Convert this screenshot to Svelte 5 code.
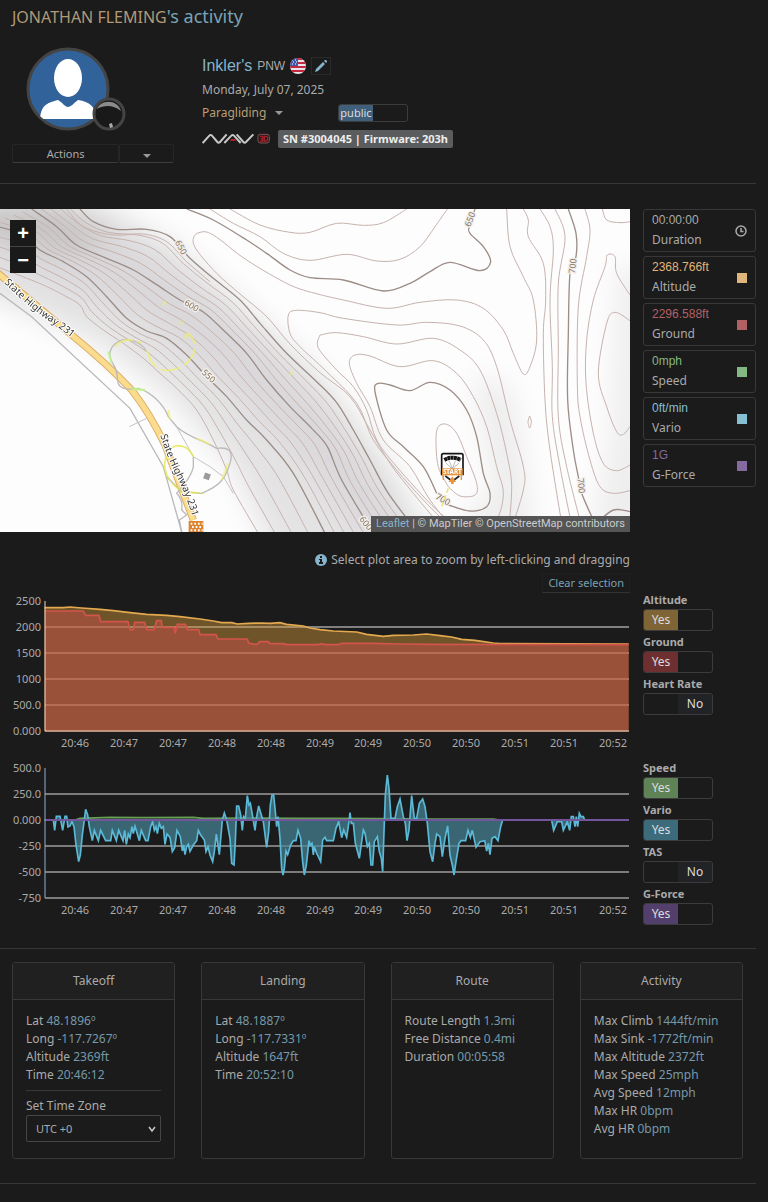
<script lang="ts">
	type Point = [number, number];

	const readouts = [
		{ value: '00:00:00', label: 'Duration', tone: 'plain' },
		{ value: '2368.766ft', label: 'Altitude', tone: 'altitude' },
		{ value: '2296.588ft', label: 'Ground', tone: 'ground' },
		{ value: '0mph', label: 'Speed', tone: 'speed' },
		{ value: '0ft/min', label: 'Vario', tone: 'vario' },
		{ value: '1G', label: 'G-Force', tone: 'gforce' }
	];

	let heightSeries = $state([
		{ id: 'altitude', label: 'Altitude', on: true },
		{ id: 'ground', label: 'Ground', on: true },
		{ id: 'heart', label: 'Heart Rate', on: false }
	]);

	let rateSeries = $state([
		{ id: 'speed', label: 'Speed', on: true },
		{ id: 'vario', label: 'Vario', on: true },
		{ id: 'tas', label: 'TAS', on: false },
		{ id: 'gforce', label: 'G-Force', on: true }
	]);

	let isPublic = $state(true);

	const panels = [
		{
			title: 'Takeoff',
			rows: [['Lat', '48.1896º'], ['Long', '-117.7267º'], ['Altitude', '2369ft'], ['Time', '20:46:12']],
			zone: true
		},
		{
			title: 'Landing',
			rows: [['Lat', '48.1887º'], ['Long', '-117.7331º'], ['Altitude', '1647ft'], ['Time', '20:52:10']]
		},
		{
			title: 'Route',
			rows: [['Route Length', '1.3mi'], ['Free Distance', '0.4mi'], ['Duration', '00:05:58']]
		},
		{
			title: 'Activity',
			rows: [
				['Max Climb', '1444ft/min'],
				['Max Sink', '-1772ft/min'],
				['Max Altitude', '2372ft'],
				['Max Speed', '25mph'],
				['Avg Speed', '12mph'],
				['Max HR', '0bpm'],
				['Avg HR', '0bpm']
			]
		}
	];

	const times = ['20:46', '20:47', '20:47', '20:48', '20:48', '20:49', '20:49', '20:50', '20:50', '20:51', '20:51', '20:52'];
	const timeX = (i: number) => 75 + i * 49 - Math.floor(i / 6);

	const heightTicks = ['2500', '2000', '1500', '1000', '500.0', '0.000'];
	const rateTicks = ['500.0', '250.0', '0.000', '-250', '-500', '-750'];
	const tickY = (i: number) => 7 + i * 26;

	// Plot traces, three units to the pixel
	const altitude =
		'134,203 190,203 210,201 245,204 300,208 340,212 390,218 440,223 500,226 540,230 600,237 640,243 665,248 695,248 712,252 745,250 785,249 810,250 840,248 860,253 910,258 930,264 960,269 1000,273 1070,276 1100,283 1150,289 1180,286 1240,285 1280,282 1320,287 1355,291 1385,298 1425,301 1480,309 1500,311 1886,312';
	const ground =
		'134,213 250,213 257,226 297,226 302,245 384,245 390,269 400,269 404,247 434,247 440,269 462,269 470,242 484,242 486,262 522,262 526,280 532,253 556,253 562,269 596,269 600,284 648,284 654,297 742,297 746,309 770,314 780,305 805,305 810,311 850,311 860,314 955,314 962,311 975,314 1015,314 1025,310 1120,310 1200,312 1300,313 1886,314';
	const vario =
		'134,195 160,195 164,226 169,184 180,184 188,226 195,184 200,184 204,216 210,213 216,200 222,215 228,270 236,320 241,300 247,240 257,163 263,180 268,215 277,257 283,226 295,257 302,226 317,257 332,257 337,226 349,257 356,226 369,257 374,226 379,268 385,237 390,248 396,215 400,236 405,214 418,257 424,226 437,257 444,257 452,215 458,200 463,226 468,215 472,236 478,205 484,220 490,215 495,268 501,237 510,247 517,290 524,278 531,226 541,245 547,288 551,270 555,299 560,275 565,268 570,289 580,270 590,257 595,226 602,240 613,255 618,290 624,275 630,300 638,320 643,290 649,237 658,299 667,195 673,174 680,195 690,250 695,325 702,330 706,260 710,153 716,153 722,180 727,226 731,185 736,190 742,122 747,150 751,145 758,185 765,226 770,185 776,153 784,180 790,200 800,277 806,230 811,150 816,120 821,120 826,170 830,215 834,185 840,250 845,340 849,360 853,340 858,288 863,299 872,270 880,257 888,257 894,226 902,250 908,320 913,360 919,330 927,257 931,270 936,265 940,300 943,275 950,295 955,305 962,320 968,255 975,247 980,257 1000,257 1008,220 1016,200 1025,248 1031,225 1040,247 1047,200 1050,173 1054,205 1060,205 1066,265 1078,310 1090,225 1095,235 1102,275 1108,265 1113,330 1118,330 1123,260 1132,245 1138,290 1144,310 1148,350 1152,230 1156,120 1162,60 1167,100 1173,190 1185,190 1192,155 1200,132 1210,185 1216,205 1221,257 1227,225 1235,122 1243,190 1250,190 1258,145 1268,132 1275,155 1282,205 1290,290 1298,320 1305,265 1310,237 1320,245 1327,305 1335,250 1343,213 1350,300 1357,330 1362,360 1368,320 1377,265 1383,257 1397,257 1404,226 1411,247 1417,226 1428,277 1440,260 1454,257 1460,288 1465,265 1470,299 1476,250 1485,245 1494,257 1502,215 1508,195 1655,195 1661,226 1672,200 1685,200 1690,226 1702,200 1709,226 1714,185 1720,185 1725,215 1729,185 1733,215 1738,175 1743,185 1750,185 1754,195 1886,195';
	const speed =
		'134,195 225,195 240,190 330,187 430,188 580,187 610,190 740,189 900,190 1000,190 1130,191 1300,192 1480,192 1500,195 1886,195';

	function parse(s: string): Point[] {
		return s.split(' ').map((p) => p.split(',').map(Number) as Point);
	}

	// Catmull-Rom through every point
	function curve(s: string): string {
		const p = parse(s);
		let d = `M${p[0]}`;
		for (let i = 0; i < p.length - 1; i++) {
			const a = p[Math.max(i - 1, 0)];
			const b = p[i];
			const c = p[i + 1];
			const e = p[Math.min(i + 2, p.length - 1)];
			d += `C${b[0] + (c[0] - a[0]) / 6},${b[1] + (c[1] - a[1]) / 6} ${c[0] - (e[0] - b[0]) / 6},${c[1] - (e[1] - b[1]) / 6} ${c}`;
		}
		return d;
	}

	function between(from: string, to: string, t: number): string {
		const a = parse(from);
		const b = parse(to);
		return a.map(([x, y], i) => `${x + (b[i][0] - x) * t},${y + (b[i][1] - y) * t}`).join(' ');
	}

	// Index contours of the west slope, same number of points in each
	const slope = [
		'240,27 280,65 350,88 440,88 510,110 570,175 640,235 720,300 780,370 860,460 950,545 1010,608 1060,690 1110,780 1165,880 1255,1000',
		'95,27 170,80 230,135 320,175 400,210 470,254 540,300 610,336 680,400 740,460 800,540 870,620 935,685 982,740 1025,840 1120,1000',
		'-40,72 60,100 120,150 190,185 260,230 320,290 380,355 440,393 500,415 560,465 620,530 680,590 740,660 800,720 880,820 975,1000',
		'-60,180 30,215 130,255 190,285 240,315 260,350 310,390 370,430 430,475 480,520 530,565 590,630 640,720 680,810 700,870 775,1000'
	];

	const indexLines = [
		...slope.slice(0, 3),
		'560,27 640,60 740,120 800,160 870,210 930,233 1030,240 1150,273 1230,250 1290,215 1350,187 1440,212 1472,185 1450,140 1410,100 1408,80 1425,27',
		'1310,880 1270,800 1210,740 1160,690 1125,575 1135,550 1170,555 1230,572 1290,547 1350,570 1400,630 1430,710 1450,820 1470,880 1460,920 1410,933 1345,915',
		'1705,27 1728,100 1728,170 1710,220 1705,400 1703,600 1720,750 1735,830 1745,880 1780,960 1800,1000',
		'1790,970 1840,930 1890,935'
	];

	const contours = [
		...[0.2, 0.4, 0.6, 0.8].flatMap((t) => [between(slope[0], slope[1], t), between(slope[1], slope[2], t)]),
		...[0.25, 0.5, 0.75, 1].map((t) => between(slope[2], slope[3], t)),
		'200,27 250,80 340,105 430,102 500,125 560,185 630,245',
		'960,284 870,255 740,180 640,105 600,97 580,115 590,150 650,220 720,282 800,350 870,432 960,518 1050,590 1110,690 1170,790 1240,880 1340,1000',
		'690,27 780,75 870,97 930,97 1010,70 1090,76 1150,68 1220,27',
		'630,27 700,70 780,110 850,160 930,181 1040,163 1130,183 1200,178 1260,140 1305,80 1342,27',
		'960,284 1030,300 1160,325 1260,307 1370,300 1450,325 1510,390 1540,460 1570,522 1590,500 1610,420 1600,300 1570,230 1530,140 1520,27',
		'1530,1000 1570,870 1570,800 1530,660 1490,500 1450,420 1380,378 1280,367 1190,375 1030,355 960,338 890,331 865,345 870,400 900,440 980,515 1070,610 1120,720 1190,810 1270,900 1370,1000',
		'960,405 952,430 962,455 1010,510 1060,560 1100,630 1130,720 1190,800 1310,930 1400,1000',
		'960,405 1010,398 1090,410 1190,432 1300,415 1380,450 1440,510 1490,640 1520,760 1535,860 1525,1000',
		'1370,1000 1290,900 1230,800 1150,720 1110,620 1070,550 1048,490 1065,465 1110,468 1200,500 1300,482 1370,520 1420,590 1460,680 1490,800 1510,880 1490,960 1440,1000',
		'1345,860 1315,800 1308,720 1315,680 1340,673 1370,700 1400,770 1430,850 1425,885 1380,888 1345,860',
		'1570,27 1585,60 1585,110 1630,190 1637,300 1630,400 1635,600 1650,750 1690,1000',
		'1620,27 1650,80 1660,150 1650,300 1657,500 1657,650 1680,800 1720,1000',
		'1665,27 1695,110 1675,250 1675,450 1675,650 1700,800 1750,1000',
		'1755,27 1770,90 1760,170 1735,320 1732,550 1740,650 1770,780 1800,860 1840,880 1890,872',
		'1890,285 1850,220 1845,170 1822,165 1815,200 1780,300 1760,420 1758,550 1780,700 1810,790 1850,812 1890,795',
		'1890,362 1845,337 1820,370 1795,520 1820,620 1850,695 1870,703 1890,680',
		'1807,27 1820,60 1860,68 1890,65',
		'1589,648 1584,665 1589,684 1594,665 1589,648'
	];

	const elevations = [
		{ text: '650', x: 543, y: 142, turn: 62 },
		{ text: '600', x: 575, y: 317, turn: 30 },
		{ text: '550', x: 626, y: 528, turn: 42 },
		{ text: '650', x: 1410, y: 58, turn: -70 },
		{ text: '700', x: 1718, y: 198, turn: -84 },
		{ text: '700', x: 1744, y: 857, turn: 84 },
		{ text: '700', x: 1329, y: 898, turn: 30 },
		{ text: '600', x: 1098, y: 970, turn: 52 }
	];
</script>

{#snippet toggles(series: { id: string; label: string; on: boolean }[])}
	<div class="toggles">
		{#each series as s (s.id)}
			<div class="toggle">
				<label class="toggle-label" for="show-{s.id}">{s.label}</label>
				<span class="switch {s.id}">
					<input type="checkbox" id="show-{s.id}" bind:checked={s.on} />
					<span class="half yes">{s.on ? 'Yes' : ''}</span>
					<span class="half no">{s.on ? '' : 'No'}</span>
				</span>
			</div>
		{/each}
	</div>
{/snippet}

{#snippet axisLabels(ticks: string[])}
	{#each ticks as tick, i}
		<text x="41" y={tickY(i) + 4} text-anchor="end">{tick}</text>
	{/each}
	{#each times as time, i}
		<text x={timeX(i)} y="153" text-anchor="middle">{time}</text>
	{/each}
{/snippet}

<main>
	<h1><a href="#pilot">JONATHAN FLEMING</a>'s activity</h1>

	<header class="summary">
		<div class="pilot">
			<div class="avatar">
				<svg viewBox="0 0 84 84" aria-label="Pilot" role="img">
					<defs>
						<clipPath id="face"><circle cx="42" cy="42" r="39" /></clipPath>
					</defs>
					<circle cx="42" cy="42" r="40" fill="#31639a" stroke="#444" stroke-width="3" />
					<g fill="#fff" clip-path="url(#face)">
						<ellipse cx="42" cy="31" rx="14" ry="19" />
						<path d="M14 72C15 59 20 56 32 53C37 56 39 60 42 60S48 56 52 53C64 55 69 59 71 72Z" />
					</g>
				</svg>
				<svg class="badge" viewBox="0 0 34 34" aria-hidden="true">
					<circle cx="17" cy="17" r="15" fill="#191919" stroke="#444" stroke-width="3" />
					<path d="M5 12C8 3 25 1 29 14C22 9 14 7 5 12Z" fill="#8b8b8b" />
					<path d="M17 27L20 26L21 30L18 31Z" fill="#aaa" />
				</svg>
			</div>
			<div class="actions">
				<button type="button">Actions</button>
				<button type="button" class="more" aria-label="More actions"><span class="caret"></span></button>
			</div>
		</div>

		<div class="flight">
			<div class="site">
				<a href="#site">Inkler's</a>
				<span class="region">PNW</span>
				<svg class="flag" viewBox="0 0 16 16" role="img" aria-label="United States">
					<defs>
						<clipPath id="round"><circle cx="8" cy="8" r="8" /></clipPath>
					</defs>
					<g clip-path="url(#round)">
						<rect width="16" height="16" fill="#e8e4ea" />
						<path d="M0 1H16M0 5H16M0 9H16M0 13H16" stroke="#c3283f" stroke-width="2" />
						<rect width="8" height="8" fill="#3d58a8" />
						<path d="M2 2h1M5 2h1M3 4h1M6 4h1M2 6h1M5 6h1" stroke="#fff" />
					</g>
				</svg>
				<button type="button" class="edit" aria-label="Edit site">
					<svg viewBox="0 0 12 12" fill="#85b4cc">
						<path d="M0 12L1 9L8 2L10 4L3 11Z" />
						<path d="M9 1L10 0H11L12 1V2L11 3Z" />
					</svg>
				</button>
			</div>
			<div class="date">Monday, July 07, 2025</div>
			<div class="kind">
				<span class="sport">
					<select aria-label="Activity type">
						<option>Paragliding</option>
					</select>
					<span class="caret"></span>
				</span>
				<label class="switch public">
					<input type="checkbox" bind:checked={isPublic} aria-label="public" />
					<span class="half yes">{isPublic ? 'public' : ''}</span>
					<span class="half no">{isPublic ? '' : 'private'}</span>
				</label>
			</div>
			<div class="device">
				<svg class="brand" viewBox="0 0 210 36" role="img" aria-label="Instrument maker">
					<g fill="none" stroke="#c8c8c8" stroke-width="6">
						<path d="M2 30L22 8Q26 4 30 8L46 27Q50 31 54 27L74 4" />
						<path d="M67 30L88 8Q92 4 96 8L116 30" />
						<path d="M104 4L124 27Q128 31 132 27L154 4" />
					</g>
					<path d="M84 23L88 18H98L102 23Z" fill="#c9202f" />
					<rect x="168" y="4" width="34" height="26" rx="7" fill="none" stroke="#8b5055" stroke-width="3" />
					<path d="M174 10H182V24H174M176 17H182M187 10V24H192Q197 24 197 17T192 10Z" fill="none" stroke="#a4202c" stroke-width="4" />
				</svg>
				<span class="serial">SN #3004045 | Firmware: 203h</span>
			</div>
		</div>
	</header>

	<hr />

	<section class="row">
		<div class="map">
			<svg viewBox="0 27 1890 969" preserveAspectRatio="xMinYMin slice" role="img" aria-label="Flight track">
				<defs>
					<filter id="soft" x="-20%" y="-20%" width="140%" height="140%">
						<feGaussianBlur stdDeviation="40" />
					</filter>
					<path id="road-north" d="M12 248Q90 325 140 358T260 450" />
					<path id="road-south" d="M481 706Q500 770 535 840T590 1000" />
				</defs>
				<rect y="27" width="1890" height="969" fill="#fdfdfd" />
				<g filter="url(#soft)">
					<path d="M-80 0H290L520 130L760 340L960 520L1130 730L1330 1060H820L700 800L500 580L280 420L-80 270Z" fill="#e4e3e4" />
					<path d="M-80 0H200L400 120L600 260L800 440L1000 640L1180 900L1200 1060H1120L930 800L700 560L460 370L-80 140Z" fill="#dad8da" />
					<path d="M-80 0H160L340 130L200 160L-80 100Z" fill="#c6c4c5" />
					<path d="M1420 520L1530 560L1570 760L1600 1000H1330L1480 880Z" fill="#ececec" />
					<path d="M1850 200H1960V1060H1760L1830 700Z" fill="#eeeeef" />
				</g>
				<g fill="none" stroke="#c6b3ae" stroke-width="3">
					{#each contours as line}
						<path d={curve(line)} />
					{/each}
				</g>
				<g fill="none" stroke="#9c8d87" stroke-width="4">
					{#each indexLines as line}
						<path d={curve(line)} />
					{/each}
				</g>

				<!-- Roads -->
				<g fill="none">
					<path d="M0 280L95 350L390 625L490 800L545 996" stroke="#b9b9bd" stroke-width="4" />
					<path d="M388 680L440 655M530 680L580 770L630 800L670 830L700 880" stroke="#c4c4c4" stroke-width="3" />
					<path d="M-8 218L215 405Q320 490 395 570Q450 640 495 735L580 960" stroke="#dcae6c" stroke-width="22" />
					<path d="M-8 218L215 405Q320 490 395 570Q450 640 495 735L580 960" stroke="#fbdc8d" stroke-width="16" />
				</g>

				<!-- Track -->
				<g fill="none" stroke-width="4" stroke="#bcbabc">
					<path d="M440 455C420 415 350 400 330 455C325 490 350 490 352 530C350 570 380 570 415 565C450 575 490 610 505 650L530 680C570 715 600 715 650 745C690 740 700 755 690 790C675 840 655 860 605 880L545 875L500 830" />
					<path d="M580 770V800Q575 830 530 880Q550 900 545 930L560 945L538 960L545 996" />
				</g>
				<g fill="none" stroke="#eef06b" stroke-width="5" opacity="0.8">
					<path d="M345 440C365 415 400 415 425 430M440 450C460 520 500 520 545 500C600 465 590 415 560 400" stroke-dasharray="60 14" />
					<path d="M400 567L435 570M505 630L510 660M590 715L630 733M685 790L665 840" />
					<path d="M580 770C565 735 525 725 505 755C480 800 500 850 550 875L610 880" stroke="#e4e63e" stroke-dasharray="90 8" />
					<path d="M490 307l6 4M542 366l4 4M555 405l8 6M872 518l4 4" stroke-width="16" opacity="0.7" />
				</g>
				<path d="M325 455L335 490M395 567L435 570" fill="none" stroke="#bdf38f" stroke-width="6" />
				<rect x="612" y="820" width="18" height="18" fill="#9b9b9b" transform="rotate(20 621 829)" />

				<g class="elevation">
					{#each elevations as e}
						<text x={e.x} y={e.y + 9} transform="rotate({e.turn} {e.x} {e.y})">{e.text}</text>
					{/each}
				</g>
				<g class="road-name">
					<text><textPath href="#road-north">State Highway 231</textPath></text>
					<text><textPath href="#road-south">State Highway 231</textPath></text>
				</g>

				<!-- Landing flag -->
				<rect x="566" y="963" width="44" height="36" fill="#dd8431" />
				<path d="M572 971H608M576 981H608M572 991H608" stroke="#fff" stroke-width="6" stroke-dasharray="5 6" />

				<!-- Takeoff marker -->
				<g>
					<path d="M1345 865L1325 920" stroke="#efe37d" stroke-width="5" stroke-dasharray="14 8" />
					<path d="M1325 826V766Q1325 761 1330 761H1384Q1389 761 1389 766V826" fill="#fff" stroke="#161616" stroke-width="5" />
					<path d="M1333 780Q1357 766 1382 780" fill="none" stroke="#161616" stroke-width="12" stroke-dasharray="9 1" />
					<path d="M1337 788L1356 806M1348 783L1357 806M1366 783L1357 806M1378 788L1358 806" stroke="#999" stroke-width="2" />
					<rect x="1326" y="805" width="62" height="21" fill="#e8943f" />
					<text class="start" x="1357" y="823" text-anchor="middle">START</text>
					<path d="M1330 826V840M1384 826V840" stroke="#e8943f" stroke-width="4" />
					<path d="M1336 828L1352 840M1378 828L1362 840" stroke="#222" stroke-width="5" />
					<path d="M1357 829L1368 846H1361V852H1353V846H1346Z" fill="#e8943f" />
				</g>
			</svg>
			<div class="zoom">
				<button type="button" aria-label="Zoom in">+</button>
				<button type="button" aria-label="Zoom out">−</button>
			</div>
			<div class="credit"><a href="#leaflet">Leaflet</a> | © MapTiler © OpenStreetMap contributors</div>
		</div>

		<div class="readouts">
			{#each readouts as r}
				<div class="readout {r.tone}">
					<div>
						<div class="value">{r.value}</div>
						<div>{r.label}</div>
					</div>
					{#if r.tone === 'plain'}
						<svg class="clock" viewBox="0 0 12 12" fill="none" stroke="#aaa" stroke-width="1.5" aria-hidden="true">
							<circle cx="6" cy="6" r="5" />
							<path d="M6 3V6.5H8.500" />
						</svg>
					{:else}
						<span class="swatch"></span>
					{/if}
				</div>
			{/each}
		</div>
	</section>

	<section class="row plots">
		<div class="charts">
			<div class="hint">
				<svg viewBox="0 0 12 12" aria-hidden="true">
					<circle cx="6" cy="6" r="6" fill="#85b4cc" />
					<path d="M5 2H7V4H5ZM4 5H7V8H8V10H4V8H5V6H4Z" fill="#1b1b1b" />
				</svg>
				Select plot area to zoom by left-clicking and dragging
			</div>
			<button type="button" class="clear">Clear selection</button>

			<svg class="chart" viewBox="0 0 630 167" role="img" aria-label="Altitude and ground">
				{#each heightTicks.slice(1, 5) as _, i}
					<path d="M45 {tickY(i + 1)}H629" stroke="#e6e6e6" />
				{/each}
				<g transform="translate(0 -54) scale(0.33333)">
					{#if heightSeries[0].on}
						<polygon points="134,575 {altitude} 1886,575" fill="#d79a3c" fill-opacity="0.45" />
						<polyline points={altitude} fill="none" stroke="#e3a94f" stroke-width="5" />
					{/if}
					{#if heightSeries[1].on}
						<polygon points="134,575 {ground} 1886,575" fill="#c6504a" fill-opacity="0.5" />
						<polyline points={ground} fill="none" stroke="#d2544b" stroke-width="5" />
					{/if}
				</g>
				<path d="M45 7V137H629" fill="none" stroke="#f0d9c4" />
				{@render axisLabels(heightTicks)}
			</svg>

			<svg class="chart" viewBox="0 0 630 167" role="img" aria-label="Speed, vario and g-force">
				{#each rateTicks.slice(1) as _, i}
					<path d="M45 {tickY(i + 1)}H629" stroke="#dcdcdc" />
				{/each}
				<g transform="translate(0 -6) scale(0.33333)">
					{#if rateSeries[0].on}
						<polyline points={speed} fill="none" stroke="#66a054" stroke-width="5" />
					{/if}
					{#if rateSeries[1].on}
						<polygon points="134,195 {vario} 1886,195" fill="#478698" fill-opacity="0.7" />
						<polyline points={vario} fill="none" stroke="#5ab9d6" stroke-width="5" />
					{/if}
				</g>
				{#if rateSeries[3].on}
					<path d="M45 59H629" stroke="#73559b" stroke-width="2" />
				{/if}
				<path d="M45 7V137" stroke="#8fb0d6" />
				{@render axisLabels(rateTicks)}
			</svg>
		</div>

		<div class="series">
			{@render toggles(heightSeries)}
			{@render toggles(rateSeries)}
		</div>
	</section>

	<hr />

	<section class="panels">
		{#each panels as panel}
			<article class="panel">
				<h2>{panel.title}</h2>
				<div class="panel-body">
					{#each panel.rows as [name, value]}
						<div>{name} <span class="figure">{value}</span></div>
					{/each}
					{#if panel.zone}
						<div class="zone">
							<label for="zone">Set Time Zone</label>
							<div class="zone-box">
								<select id="zone">
									<option>UTC +0</option>
								</select>
								<svg viewBox="0 0 8 8" fill="none" stroke="#c8c8c8" stroke-width="1.5" aria-hidden="true">
									<path d="M1 2L4 6L7 2" />
								</svg>
							</div>
						</div>
					{/if}
				</div>
			</article>
		{/each}
	</section>

	<hr />
</main>

<style>
	:global(body) {
		margin: 0;
		background: #1b1b1b;
	}

	main {
		padding: 3px 12px 18px 0;
		color: #aaa;
		font-family: 'Noto Sans', sans-serif;
		font-size: 12px;
		line-height: 18px;
	}

	* {
		box-sizing: border-box;
	}

	a {
		color: #85b4cc;
		text-decoration: none;
	}

	button,
	select {
		margin: 0;
		padding: 0;
		border: 0;
		background: none;
		color: inherit;
		font: inherit;
		appearance: none;
	}

	svg {
		display: block;
	}

	hr {
		height: 1px;
		margin: 0;
		border: 0;
		background: #383838;
	}

	h1 {
		margin: 0 0 18px 12px;
		color: #7aa3b5;
		font-size: 18px;
		font-weight: 400;
		line-height: 26px;
	}

	h1 a {
		color: #b09a78;
		font-size: 16px;
	}

	.summary {
		display: flex;
		gap: 28px;
		padding: 0 0 20px 12px;
	}

	.pilot {
		width: 162px;
	}

	.avatar {
		position: relative;
		width: 84px;
		margin: -1px 0 13px 14px;
	}

	.badge {
		position: absolute;
		right: -16px;
		bottom: 0;
		width: 34px;
	}

	.actions {
		display: flex;
	}

	.actions button {
		flex: 2;
		height: 19px;
		border: 1px solid #262626;
		border-bottom-color: #3c3c3c;
		border-radius: 2px;
		font-size: 11px;
		line-height: 17px;
	}

	.actions .more {
		flex: 1;
	}

	.caret {
		display: inline-block;
		border: 4px solid transparent;
		border-top-color: #999;
		border-bottom: 0;
	}

	.flight {
		padding-top: 7px;
	}

	.site {
		display: flex;
		align-items: center;
		gap: 5px;
		height: 22px;
		font-family: 'Liberation Sans', sans-serif;
	}

	.site a {
		font-size: 16px;
	}

	.flag {
		width: 16px;
	}

	.edit {
		display: grid;
		place-items: center;
		width: 20px;
		height: 18px;
		border: 1px solid #292929;
	}

	.edit svg {
		width: 12px;
	}

	.date {
		margin-top: 4px;
	}

	.kind {
		display: flex;
		align-items: center;
		gap: 55px;
		height: 20px;
		margin-top: 4px;
	}

	.sport {
		display: flex;
		align-items: center;
		gap: 8px;
		color: #b89f76;
	}

	.switch {
		position: relative;
		display: flex;
		width: 70px;
		height: 22px;
		overflow: hidden;
		border: 1px solid #3c3c3c;
		border-radius: 3px;
	}

	.switch input {
		position: absolute;
		inset: 0;
		width: 100%;
		height: 100%;
		margin: 0;
		opacity: 0;
	}

	.half {
		flex: 1;
		color: #ddd;
		font-size: 12px;
		line-height: 20px;
		text-align: center;
	}

	.switch input:not(:checked) ~ .no {
		background: #212326;
	}

	.switch.public {
		height: 18px;
	}

	.public .half {
		font-size: 11px;
		line-height: 16px;
	}

	.public input:checked ~ .yes {
		background: #405f7a;
	}

	.altitude input:checked ~ .yes {
		background: #7f6436;
	}

	.ground input:checked ~ .yes {
		background: #6e2f31;
	}

	.speed input:checked ~ .yes {
		background: #5f8257;
	}

	.vario input:checked ~ .yes {
		background: #3c6b7b;
	}

	.gforce input:checked ~ .yes {
		background: #533f6c;
	}

	.device {
		display: flex;
		align-items: center;
		gap: 6px;
		margin-top: 7px;
	}

	.brand {
		width: 70px;
	}

	.serial {
		padding: 0 5px;
		border-radius: 2px;
		background: #5b5c5e;
		color: #eee;
		font-size: 11px;
		font-weight: 700;
	}

	.row {
		display: flex;
		gap: 13px;
		margin-top: 25px;
	}

	.map {
		position: relative;
		flex: 1;
		min-width: 0;
		height: 323px;
		overflow: hidden;
	}

	.map > svg {
		width: 100%;
		height: 100%;
	}

	.elevation text {
		fill: #8b7455;
		stroke: #f0efef;
		stroke-width: 8px;
		paint-order: stroke;
		font-size: 26px;
		text-anchor: middle;
	}

	.road-name text {
		fill: #333;
		stroke: #fff;
		stroke-width: 6px;
		paint-order: stroke;
		font-size: 30px;
	}

	.start {
		fill: #fff;
		font-size: 19px;
		font-weight: 700;
	}

	.zoom {
		position: absolute;
		top: 11px;
		left: 10px;
		display: grid;
		gap: 1px;
		border-radius: 2px;
		background: #444;
	}

	.zoom button {
		width: 26px;
		height: 26px;
		background: #1a1a1a;
		color: #fff;
		font: bold 20px/26px 'Liberation Sans', sans-serif;
	}

	.credit {
		position: absolute;
		right: 0;
		bottom: 0;
		padding: 0 5px;
		background: #555;
		color: #ccc;
		font: 11px/16px Roboto, sans-serif;
	}

	.readouts {
		display: flex;
		flex-direction: column;
		gap: 4px;
		width: 113px;
	}

	.readout {
		display: flex;
		align-items: center;
		justify-content: space-between;
		height: 43px;
		padding: 0 8px;
		border: 1px solid #383838;
		border-radius: 3px;
		line-height: 20px;
	}

	.value {
		color: var(--tone);
		font-family: 'Liberation Sans', sans-serif;
		line-height: 19px;
	}

	.swatch {
		width: 10px;
		height: 10px;
		background: var(--tone);
	}

	.clock {
		width: 12px;
	}

	.readout.altitude {
		--tone: #e0b57c;
	}

	.readout.ground {
		--tone: #b36065;
	}

	.readout.speed {
		--tone: #84b882;
	}

	.readout.vario {
		--tone: #85bfd3;
	}

	.readout.gforce {
		--tone: #856a9f;
	}

	.plots {
		margin: 0 0 20px;
	}

	.charts {
		display: flex;
		flex: 1;
		flex-direction: column;
		min-width: 0;
		padding-top: 19px;
	}

	.hint {
		display: flex;
		align-items: center;
		align-self: flex-end;
		gap: 4px;
	}

	.hint svg {
		width: 12px;
	}

	.clear {
		align-self: flex-end;
		height: 20px;
		margin: 4px 0 1px;
		padding: 0 5px;
		border: 1px solid #202020;
		border-bottom-color: #333;
		color: #7ba0b3;
		font-size: 11px;
	}

	.chart {
		width: 100%;
	}

	.chart text {
		fill: #aaa;
		font-size: 11px;
	}

	.series {
		display: flex;
		flex-direction: column;
		gap: 44px;
		width: 113px;
		padding-top: 59px;
	}

	.toggles {
		display: grid;
		gap: 2px;
	}

	.toggle-label {
		display: block;
		font-size: 11px;
		font-weight: 700;
	}

	.panels {
		display: grid;
		grid-template-columns: repeat(4, 1fr);
		gap: 26px;
		margin: 13px 13px 24px 12px;
	}

	.panel {
		min-height: 197px;
		border: 1px solid #383838;
		border-radius: 3px;
	}

	h2 {
		margin: 0;
		border-bottom: 1px solid #383838;
		background: #202020;
		font-size: 12px;
		font-weight: 400;
		line-height: 36px;
		text-align: center;
	}

	.panel-body {
		padding: 12px 13px;
	}

	.figure {
		color: #7599aa;
	}

	.zone {
		margin-top: 6px;
		padding-top: 6px;
		border-top: 1px solid #383838;
	}

	.zone-box {
		display: grid;
		align-items: center;
	}

	.zone-box > * {
		grid-area: 1 / 1;
	}

	.zone-box select {
		width: 100%;
		height: 27px;
		padding-left: 9px;
		border: 1px solid #454545;
		border-radius: 2px;
		font-size: 11px;
	}

	.zone-box svg {
		justify-self: end;
		width: 8px;
		margin-right: 5px;
		pointer-events: none;
	}
</style>
